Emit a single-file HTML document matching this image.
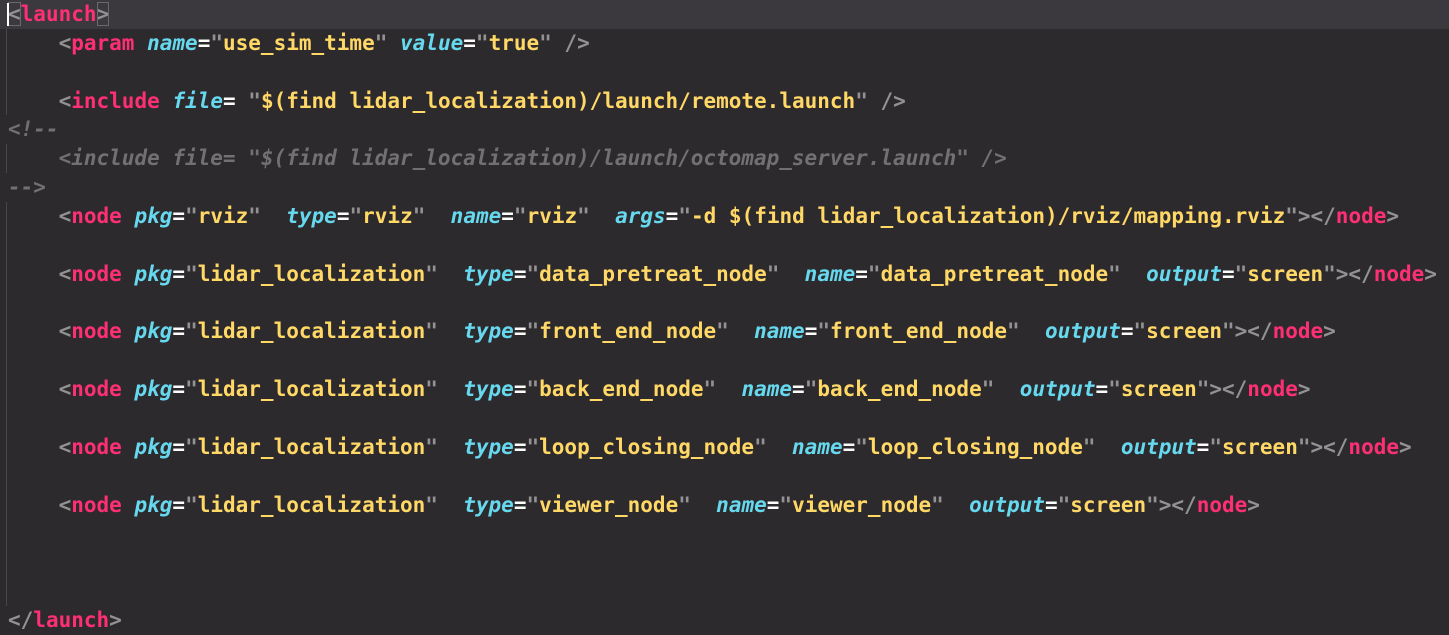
<!DOCTYPE html>
<html><head><meta charset="utf-8"><style>
html,body{margin:0;padding:0;background:#2d2a2e;width:1449px;height:633px;overflow:hidden}
.ed{position:absolute;left:0;top:0;width:1449px;font-family:"DejaVu Sans Mono","Liberation Mono",monospace;font-weight:bold;font-size:21px}
.l{height:28.86px;line-height:28.86px;white-space:pre;padding-left:8px;position:relative}
.g::before{content:"";position:absolute;left:6px;top:0;bottom:0;border-left:1px solid #4a474c}
.cur{background:#3b393d}
.t{color:#ff2f74}.p{color:#939293}.a{color:#66d9ef;font-style:italic}.s{color:#ffd866}.e{color:#fcfcfa}.c{color:#727072;font-style:italic}
.b{outline:1px solid #6a686c;outline-offset:-1px}
.k{position:absolute;left:7px;top:3px;width:2px;height:23px;background:#fff}
</style></head><body><div class="ed">
<div class="l cur"><span class="k"></span><span class="p b">&lt;</span><span class="t">launch</span><span class="p b">&gt;</span></div>
<div class="l g">    <span class="p">&lt;</span><span class="t">param</span> <span class="a">name</span><span class="e">=</span><span class="p">"</span><span class="s">use_sim_time</span><span class="p">"</span> <span class="a">value</span><span class="e">=</span><span class="p">"</span><span class="s">true</span><span class="p">" /&gt;</span></div>
<div class="l g"> </div>
<div class="l g">    <span class="p">&lt;</span><span class="t">include</span> <span class="a">file</span><span class="e">=</span> <span class="p">"</span><span class="s">$(find lidar_localization)/launch/remote.launch</span><span class="p">" /&gt;</span></div>
<div class="l"><span class="c">&lt;!--</span></div>
<div class="l g"><span class="c">    &lt;include file= "$(find lidar_localization)/launch/octomap_server.launch" /&gt;</span></div>
<div class="l"><span class="c">--&gt;</span></div>
<div class="l g">    <span class="p">&lt;</span><span class="t">node</span> <span class="a">pkg</span><span class="e">=</span><span class="p">"</span><span class="s">rviz</span><span class="p">"</span>  <span class="a">type</span><span class="e">=</span><span class="p">"</span><span class="s">rviz</span><span class="p">"</span>  <span class="a">name</span><span class="e">=</span><span class="p">"</span><span class="s">rviz</span><span class="p">"</span>  <span class="a">args</span><span class="e">=</span><span class="p">"</span><span class="s">-d $(find lidar_localization)/rviz/mapping.rviz</span><span class="p">"&gt;&lt;/</span><span class="t">node</span><span class="p">&gt;</span></div>
<div class="l g"> </div>
<div class="l g">    <span class="p">&lt;</span><span class="t">node</span> <span class="a">pkg</span><span class="e">=</span><span class="p">"</span><span class="s">lidar_localization</span><span class="p">"</span>  <span class="a">type</span><span class="e">=</span><span class="p">"</span><span class="s">data_pretreat_node</span><span class="p">"</span>  <span class="a">name</span><span class="e">=</span><span class="p">"</span><span class="s">data_pretreat_node</span><span class="p">"</span>  <span class="a">output</span><span class="e">=</span><span class="p">"</span><span class="s">screen</span><span class="p">"&gt;&lt;/</span><span class="t">node</span><span class="p">&gt;</span></div>
<div class="l g"> </div>
<div class="l g">    <span class="p">&lt;</span><span class="t">node</span> <span class="a">pkg</span><span class="e">=</span><span class="p">"</span><span class="s">lidar_localization</span><span class="p">"</span>  <span class="a">type</span><span class="e">=</span><span class="p">"</span><span class="s">front_end_node</span><span class="p">"</span>  <span class="a">name</span><span class="e">=</span><span class="p">"</span><span class="s">front_end_node</span><span class="p">"</span>  <span class="a">output</span><span class="e">=</span><span class="p">"</span><span class="s">screen</span><span class="p">"&gt;&lt;/</span><span class="t">node</span><span class="p">&gt;</span></div>
<div class="l g"> </div>
<div class="l g">    <span class="p">&lt;</span><span class="t">node</span> <span class="a">pkg</span><span class="e">=</span><span class="p">"</span><span class="s">lidar_localization</span><span class="p">"</span>  <span class="a">type</span><span class="e">=</span><span class="p">"</span><span class="s">back_end_node</span><span class="p">"</span>  <span class="a">name</span><span class="e">=</span><span class="p">"</span><span class="s">back_end_node</span><span class="p">"</span>  <span class="a">output</span><span class="e">=</span><span class="p">"</span><span class="s">screen</span><span class="p">"&gt;&lt;/</span><span class="t">node</span><span class="p">&gt;</span></div>
<div class="l g"> </div>
<div class="l g">    <span class="p">&lt;</span><span class="t">node</span> <span class="a">pkg</span><span class="e">=</span><span class="p">"</span><span class="s">lidar_localization</span><span class="p">"</span>  <span class="a">type</span><span class="e">=</span><span class="p">"</span><span class="s">loop_closing_node</span><span class="p">"</span>  <span class="a">name</span><span class="e">=</span><span class="p">"</span><span class="s">loop_closing_node</span><span class="p">"</span>  <span class="a">output</span><span class="e">=</span><span class="p">"</span><span class="s">screen</span><span class="p">"&gt;&lt;/</span><span class="t">node</span><span class="p">&gt;</span></div>
<div class="l g"> </div>
<div class="l g">    <span class="p">&lt;</span><span class="t">node</span> <span class="a">pkg</span><span class="e">=</span><span class="p">"</span><span class="s">lidar_localization</span><span class="p">"</span>  <span class="a">type</span><span class="e">=</span><span class="p">"</span><span class="s">viewer_node</span><span class="p">"</span>  <span class="a">name</span><span class="e">=</span><span class="p">"</span><span class="s">viewer_node</span><span class="p">"</span>  <span class="a">output</span><span class="e">=</span><span class="p">"</span><span class="s">screen</span><span class="p">"&gt;&lt;/</span><span class="t">node</span><span class="p">&gt;</span></div>
<div class="l g"> </div>
<div class="l g"> </div>
<div class="l g"> </div>
<div class="l"><span class="p">&lt;/</span><span class="t">launch</span><span class="p">&gt;</span></div>
</div></body></html>
